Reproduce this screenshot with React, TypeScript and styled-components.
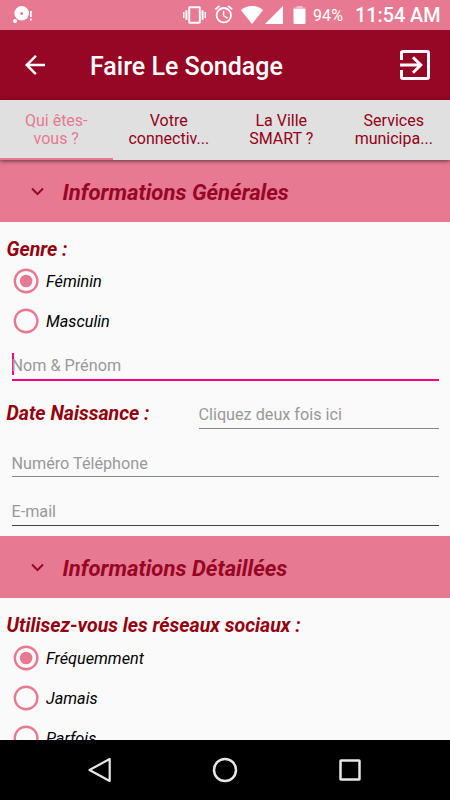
import React, { useState } from 'react';
import styled, { createGlobalStyle } from 'styled-components';

const colors = {
  rose: '#e77992',
  wine: '#960625',
  text: '#930018',
  label: '#93000e',
  paper: '#fafafa',
  tab: '#e0e0e0',
  hint: '#999999',
  accent: '#ff0078',
};

const GlobalStyle = createGlobalStyle`
  * { box-sizing: border-box; }
  body { margin: 0; background: #000; font-family: Roboto, "Liberation Sans", sans-serif; }
  svg { display: block; flex: none; }
  button { font: inherit; border: 0; background: none; padding: 0; }
`;

const Screen = styled.div`
  width: 450px;
  height: 800px;
  display: flex;
  flex-direction: column;
  overflow: hidden;
  background: ${colors.paper};
`;

const StatusBar = styled.header`
  height: 30px;
  flex: none;
  display: flex;
  align-items: center;
  padding: 0 10px 0 13px;
  background: ${colors.rose};
  color: #fff;
`;

const StatusIcons = styled.div`
  display: flex;
  align-items: center;
  margin-left: auto;
`;

const Battery = styled.span`
  font-size: 16px;
  letter-spacing: 0.1px;
  line-height: 30px;
  width: 42px;
  margin-left: 7px;
  padding-top: 1px;
`;

const Clock = styled.span`
  font-size: 19.8px;
  font-weight: 500;
  line-height: 30px;
  width: 85px;
  white-space: nowrap;
  padding-top: 1px;
`;

const AppBar = styled.div`
  height: 70px;
  flex: none;
  display: flex;
  align-items: center;
  padding: 0 17px 0 20px;
  background: ${colors.wine};
  color: #fff;
`;

const IconButton = styled.button`
  color: #fff;
  display: flex;
`;

const Title = styled.h1`
  margin: 4px auto 0 40px;
  font-size: 25px;
  font-weight: 500;
  line-height: 30px;
`;

const TabBar = styled.nav`
  height: 60px;
  flex: none;
  display: grid;
  grid-template-columns: repeat(4, 1fr);
  position: relative;
  z-index: 1;
  background: ${colors.tab};
  box-shadow: 0 1px 4px rgba(0, 0, 0, 0.6);
`;

const Tab = styled.button<{ $active: boolean }>`
  border-bottom: 2.5px solid ${p => (p.$active ? colors.rose : 'transparent')};
  color: ${p => (p.$active ? colors.rose : colors.text)};
  font-size: 16px;
  line-height: 17.6px;
  text-align: center;
  white-space: pre-line;
  padding-top: 2px;
`;

const Form = styled.main`
  height: 580px;
  flex: none;
  overflow: hidden;
`;

const SectionHeader = styled.div`
  height: 62px;
  display: flex;
  align-items: center;
  gap: 16.5px;
  padding-left: 30px;
  background: ${colors.rose};
  color: ${colors.wine};
`;

const Chevron = styled.svg`
  margin-top: 2px;
`;

const SectionTitle = styled.h2`
  margin: 2px 0 0;
  font-size: 22.1px;
  line-height: 28px;
  font-weight: 700;
  font-style: italic;
`;

const Label = styled.div`
  padding-left: 6.5px;
  font-size: 19.55px;
  line-height: 24px;
  font-weight: 700;
  font-style: italic;
  color: ${colors.label};
  white-space: nowrap;
`;

const Group = styled.section`
  padding-top: 16px;
`;

const PersonalGroup = styled(Group)`
  height: 314px;
`;

const Radios = styled.div<{ $lift: number }>`
  padding-left: 13px;
  margin-top: -${p => p.$lift}px;
`;

const RadioRow = styled.div`
  height: 40px;
  display: flex;
  align-items: center;
  gap: 7px;
  color: #000;
  font-size: 16.25px;
  font-style: italic;
`;

const RadioText = styled.span`
  padding-top: 2px;
`;

const Ring = styled.svg`
  margin-top: 1px;
  fill: none;
  stroke: ${colors.rose};
  stroke-width: 2.4;
`;

const Dot = styled.circle`
  fill: ${colors.rose};
  stroke: none;
`;

const Field = styled.div<{ $height: number; $gap: number; $focused?: boolean; $line?: string }>`
  height: ${p => p.$height}px;
  flex: 1;
  margin: 0 11.5px 0 11.5px;
  display: flex;
  align-items: flex-end;
  padding-bottom: ${p => p.$gap}px;
  border-bottom: ${p => (p.$focused ? '2px' : '1px')} solid ${p => (p.$focused ? colors.accent : p.$line || '#888')};
  color: ${colors.hint};
  font-size: 16.2px;
  line-height: 20px;
`;

const Caret = styled.span`
  width: 2px;
  height: 22px;
  margin: 0 -2px 1px 0;
  background: ${colors.accent};
`;

const DateRow = styled.div`
  display: flex;
  align-items: flex-end;
  height: 48px;
`;

const DateLabel = styled(Label)`
  width: 187px;
  padding-bottom: 3px;
`;

const NavBar = styled.footer`
  height: 60px;
  flex: none;
  display: flex;
  align-items: center;
  justify-content: center;
  gap: 99px;
  background: #000;
`;

function Radio({ label, checked, onSelect }: { label: string; checked: boolean; onSelect: () => void }) {
  return (
    <RadioRow onClick={onSelect}>
      <Ring width="26" height="26" viewBox="0 0 26 26">
        <circle cx="13.1" cy="13" r="11.3" />
        {checked && <Dot cx="13.1" cy="13" r="6.3" />}
      </Ring>
      <RadioText>{label}</RadioText>
    </RadioRow>
  );
}

function Section({ title }: { title: string }) {
  return (
    <SectionHeader>
      <Chevron width="16" height="12" viewBox="0 0 16 12" fill="none" stroke="currentColor" strokeWidth="2">
        <path d="M2 2.5 7.5 8 13 2.5" />
      </Chevron>
      <SectionTitle>{title}</SectionTitle>
    </SectionHeader>
  );
}

const tabs = ['Qui êtes-\nvous ?', 'Votre\nconnectiv...', 'La Ville\nSMART ?', 'Services\nmunicipa...'];

export default function App() {
  const [tab, setTab] = useState(0);
  const [gender, setGender] = useState('Féminin');
  const [usage, setUsage] = useState('Fréquemment');
  return (
    <Screen>
      <GlobalStyle />
      <StatusBar>
        <svg width="20" height="18" viewBox="0 0 20 18" fill="#fff">
          <path fillRule="evenodd" d="M8.7 0a7.3 7.3 0 1 1 0 14.6 7.3 7.3 0 0 1 0-14.6Zm0 6a1.5 1.5 0 1 0 0 3 1.5 1.5 0 0 0 0-3Z" />
          <circle cx="2" cy="15" r="2" />
          <path d="M17 5h1.800v6H17zM17 12.500h1.800v2H17z" />
        </svg>
        <StatusIcons>
          <svg width="24" height="24" viewBox="0 0 25 24" fill="#fff">
            <path d="M0 15h1.600V9H0v6zm2.600 2h2V7h-2v10zM22.400 9v6H24V9h-1.600zm-3 8h2V7h-2v10zM17 3H7C6.170 3 5.500 3.670 5.500 4.500v15c0 .83.67 1.500 1.500 1.500h10c.83 0 1.500-.67 1.500-1.500v-15c0-.83-.67-1.500-1.500-1.500zM16.500 19h-9V5h9v14z" />
          </svg>
          <svg width="34" height="22" viewBox="-6 0.500 34 22" fill="#fff">
            <path transform="scale(.9)" d="m22 5.72-4.6-3.86-1.29 1.53 4.6 3.86L22 5.72zM7.88 3.39 6.6 1.86 2 5.71l1.29 1.53 4.59-3.85zM12.5 8H11v6l4.75 2.85.75-1.23-4-2.37V8zM12 4a9 9 0 1 0 0 18 9 9 0 0 0 0-18zm0 16a7 7 0 1 1 0-14 7 7 0 0 1 0 14z" />
          </svg>
          <svg width="22" height="18" viewBox="0 0 22 18" fill="#fff">
            <path d="M11 18 0 4.2C6.5-1.4 15.500-1.400 22 4.200Z" />
          </svg>
          <svg width="21" height="18" viewBox="0 0 21 18" fill="#fff">
            <path d="M2 18 20 0v18Z" />
          </svg>
          <svg width="22" height="18" viewBox="-9.500 0 22 18" fill="#fff">
            <path opacity=".5" d="M3 0h6v1.500h3v2H0v-2h3Z" />
            <path d="M0 3h12V17q0 1-1 1H1q-1 0-1-1Z" />
          </svg>
          <Battery>94%</Battery>
          <Clock>11:54 AM</Clock>
        </StatusIcons>
      </StatusBar>
      <AppBar>
        <IconButton aria-label="Retour">
          <svg width="30" height="30" viewBox="0 0 24 24" fill="currentColor">
            <path d="M20 11H7.830l5.590-5.590L12 4l-8 8 8 8 1.410-1.410L7.830 13H20v-2z" />
          </svg>
        </IconButton>
        <Title>Faire Le Sondage</Title>
        <IconButton aria-label="Quitter">
          <svg width="36" height="36" viewBox="0 0 36 36" fill="none" stroke="#fff" strokeWidth="3">
            <path d="M4.500 13V6q0-1.500 1.500-1.500h24q1.500 0 1.500 1.500v24q0 1.500-1.500 1.500H6q-1.500 0-1.500-1.500v-7M3 18h20M16 10.200 23.800 18 16 25.800" />
          </svg>
        </IconButton>
      </AppBar>
      <TabBar>
        {tabs.map((t, i) => (
          <Tab key={t} $active={i === tab} onClick={() => setTab(i)}>{t}</Tab>
        ))}
      </TabBar>
      <Form>
        <Section title="Informations Générales" />
        <PersonalGroup>
          <Label>Genre :</Label>
          <Radios $lift={2}>
            {['Féminin', 'Masculin'].map(v => (
              <Radio key={v} label={v} checked={v === gender} onSelect={() => setGender(v)} />
            ))}
          </Radios>
          <Field $height={41} $gap={3} $focused><Caret />Nom &amp; Prénom</Field>
          <DateRow>
            <DateLabel>Date Naissance :</DateLabel>
            <Field $height={40} $gap={3}>Cliquez deux fois ici</Field>
          </DateRow>
          <Field $height={48} $gap={2}>Numéro Téléphone</Field>
          <Field $height={49} $gap={3} $line="#444">E-mail</Field>
        </PersonalGroup>
        <Section title="Informations Détaillées" />
        <Group>
          <Label>Utilisez-vous les réseaux sociaux :</Label>
          <Radios $lift={1}>
            {['Fréquemment', 'Jamais', 'Parfois'].map(v => (
              <Radio key={v} label={v} checked={v === usage} onSelect={() => setUsage(v)} />
            ))}
          </Radios>
        </Group>
      </Form>
      <NavBar>
        <svg width="26" height="26" viewBox="0 0 26 26" fill="none" stroke="#e6e6e6" strokeWidth="2.200" strokeLinejoin="round">
          <path d="M22.700 2v22L2.500 13Z" />
        </svg>
        <svg width="26" height="26" viewBox="0 0 26 26" fill="none" stroke="#e6e6e6" strokeWidth="2.500">
          <circle cx="13" cy="13" r="11" />
        </svg>
        <svg width="26" height="26" viewBox="0 0 26 26" fill="none" stroke="#e6e6e6" strokeWidth="2.500">
          <rect x="3.500" y="3.500" width="19" height="19" rx="0.500" />
        </svg>
      </NavBar>
    </Screen>
  );
}
